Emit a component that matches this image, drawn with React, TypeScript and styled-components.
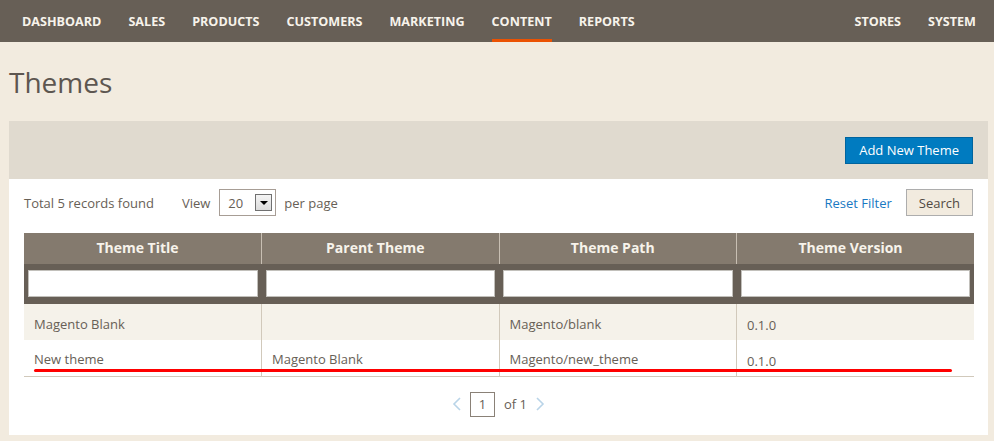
import styled, { createGlobalStyle } from "styled-components";

const GlobalStyle = createGlobalStyle`
  html, body {
    margin: 0;
    padding: 0;
    background: #f2ebdf;
    font-family: "Open Sans", "Liberation Sans", sans-serif;
    color: #676056;
  }
  * { box-sizing: border-box; }
`;

const NAV = styled.nav`
  height: 42px;
  background: #675f56;
  display: flex;
  align-items: stretch;
  padding: 0 18px 0 22px;
`;

const NAVITEM = styled.a<{ $active?: boolean; $gap?: number }>`
  position: relative;
  display: flex;
  align-items: center;
  margin-right: ${(p) => p.$gap ?? 26}px;
  font-size: 12.6px;
  font-weight: 700;
  color: #f7f3eb;
  text-transform: uppercase;
  &::after {
    content: "";
    display: ${(p) => (p.$active ? "block" : "none")};
    position: absolute;
    left: 0;
    right: 0;
    bottom: 0;
    height: 3px;
    background: #eb5202;
  }
`;

const SPACER = styled.div`
  flex: 1;
`;

const PAGE = styled.main`
  padding: 0 6px 6px 9px;
`;

const TITLE = styled.h1`
  margin: 0;
  padding: 23px 0 21px 0;
  font-size: 28px;
  font-weight: 400;
  line-height: 35px;
  color: #5d5650;
`;

const PANEL = styled.section`
  background: #fff;
  width: 979px;
`;

const ACTIONBAR = styled.div`
  height: 58px;
  background: #e0dacf;
  display: flex;
  justify-content: flex-end;
  align-items: center;
  padding: 0 15px 0 0;
`;

const PRIMARY = styled.button`
  height: 27px;
  padding: 0 13px;
  background: #007bc0;
  border: 1px solid #00649e;
  color: #fff;
  font-family: inherit;
  font-size: 13px;
  cursor: pointer;
`;

const BODY = styled.div`
  padding: 10px 15px 18px 15px;
`;

const TOOLBAR = styled.div`
  display: flex;
  align-items: center;
  height: 27px;
  font-size: 13px;
  margin-bottom: 17px;
`;

const TOTAL = styled.span`
  margin-right: 28px;
`;

const SELECTBOX = styled.div`
  display: flex;
  align-items: center;
  justify-content: space-between;
  width: 57px;
  height: 27px;
  margin: 0 8px 0 9px;
  padding: 0 3px 0 8px;
  border: 1px solid #a79d95;
  color: #676056;
`;

const ARROW = styled.span`
  width: 17px;
  height: 17px;
  border: 1px solid #707070;
  background: linear-gradient(#f4f4f4, #dcdcdc);
  display: flex;
  align-items: center;
  justify-content: center;
  &::before {
    content: "";
    border-left: 4px solid transparent;
    border-right: 4px solid transparent;
    border-top: 4px solid #000;
  }
`;

const RESET = styled.a`
  color: #1979c3;
  margin-right: 14px;
  cursor: pointer;
`;

const SECONDARY = styled.button`
  height: 27px;
  padding: 0 12px;
  background: #f2ebdf;
  border: 1px solid #adadad;
  color: #514943;
  font-family: inherit;
  font-size: 13px;
`;

const TABLEWRAP = styled.div`
  position: relative;
`;

const TABLE = styled.table`
  width: 950px;
  border-collapse: collapse;
  table-layout: fixed;
  font-size: 13px;
`;

const TH = styled.th`
  height: 31px;
  padding: 0 10px 2px 0;
  background: #847a6e;
  color: #f7f3eb;
  font-weight: 700;
  font-size: 14px;
  border-left: 1px solid #c8bfb3;
  &:first-child { border-left: none; }
`;

const FILTERCELL = styled.td`
  height: 40px;
  background: #675f56;
  padding: 6px 4px 7px 4px;
`;

const FILTERINPUT = styled.input`
  display: block;
  width: 100%;
  height: 27px;
  border: 1px solid #c2c0bb;
  background: #fff;
`;

const ROW = styled.tr<{ $odd?: boolean }>`
  background: ${(p) => (p.$odd ? "#f5f2ea" : "#fff")};
  &:last-child td { border-bottom: 1px solid #d1c9bb; }
`;

const TD = styled.td<{ $low?: boolean }>`
  height: 36px;
  padding: ${(p) => (p.$low ? "6px 10px 0 10px" : "3px 10px 0 10px")};
  border-left: 1px solid #d1c9bb;
  color: #676056;
  &:first-child { border-left: none; }
`;

const MARK = styled.div`
  position: absolute;
  left: 10px;
  width: 918px;
  bottom: 5px;
  height: 3px;
  border-radius: 2px;
  background: #ff0000;
`;

const PAGER = styled.div`
  display: flex;
  justify-content: center;
  align-items: center;
  margin-top: 15px;
  font-size: 13px;
`;

const CHEVRON = styled.svg`
  width: 10px;
  height: 16px;
  margin: 0 8px;
`;

const PAGEBOX = styled.div`
  width: 25px;
  height: 25px;
  border: 1px solid #8a8177;
  display: flex;
  align-items: center;
  justify-content: center;
  margin-right: 9px;
`;

const navItems = [
  ["Dashboard", 27],
  ["Sales", 27],
  ["Products", 27],
  ["Customers", 27],
  ["Marketing", 27],
  ["Content", 27],
  ["Reports", 0],
] as const;

const rows = [
  { title: "Magento Blank", parent: "", path: "Magento/blank", version: "0.1.0" },
  { title: "New theme", parent: "Magento Blank", path: "Magento/new_theme", version: "0.1.0" },
];

export default function App() {
  return (
    <>
      <GlobalStyle />
      <NAV>
        {navItems.map(([label, gap]) => (
          <NAVITEM key={label} $gap={gap} $active={label === "Content"}>
            {label}
          </NAVITEM>
        ))}
        <SPACER />
        <NAVITEM $gap={27}>Stores</NAVITEM>
        <NAVITEM $gap={0}>System</NAVITEM>
      </NAV>
      <PAGE>
        <TITLE>Themes</TITLE>
        <PANEL>
          <ACTIONBAR>
            <PRIMARY>Add New Theme</PRIMARY>
          </ACTIONBAR>
          <BODY>
            <TOOLBAR>
              <TOTAL>Total 5 records found</TOTAL>
              <span>View</span>
              <SELECTBOX>
                20
                <ARROW />
              </SELECTBOX>
              <span>per page</span>
              <SPACER />
              <RESET>Reset Filter</RESET>
              <SECONDARY>Search</SECONDARY>
            </TOOLBAR>
            <TABLEWRAP>
              <TABLE>
                <thead>
                  <tr>
                    <TH>Theme Title</TH>
                    <TH>Parent Theme</TH>
                    <TH>Theme Path</TH>
                    <TH>Theme Version</TH>
                  </tr>
                  <tr>
                    {[0, 1, 2, 3].map((i) => (
                      <FILTERCELL key={i}>
                        <FILTERINPUT type="text" />
                      </FILTERCELL>
                    ))}
                  </tr>
                </thead>
                <tbody>
                  {rows.map((r, i) => (
                    <ROW key={r.path} $odd={i % 2 === 0}>
                      <TD>{r.title}</TD>
                      <TD>{r.parent}</TD>
                      <TD>{r.path}</TD>
                      <TD $low>{r.version}</TD>
                    </ROW>
                  ))}
                </tbody>
              </TABLE>
              <MARK />
            </TABLEWRAP>
            <PAGER>
              <CHEVRON viewBox="0 0 10 16">
                <path d="M8 2 L2 8 L8 14" fill="none" stroke="#b9d4e8" strokeWidth="1.6" />
              </CHEVRON>
              <PAGEBOX>1</PAGEBOX>
              <span>of 1</span>
              <CHEVRON viewBox="0 0 10 16">
                <path d="M2 2 L8 8 L2 14" fill="none" stroke="#b9d4e8" strokeWidth="1.6" />
              </CHEVRON>
            </PAGER>
          </BODY>
        </PANEL>
      </PAGE>
    </>
  );
}
